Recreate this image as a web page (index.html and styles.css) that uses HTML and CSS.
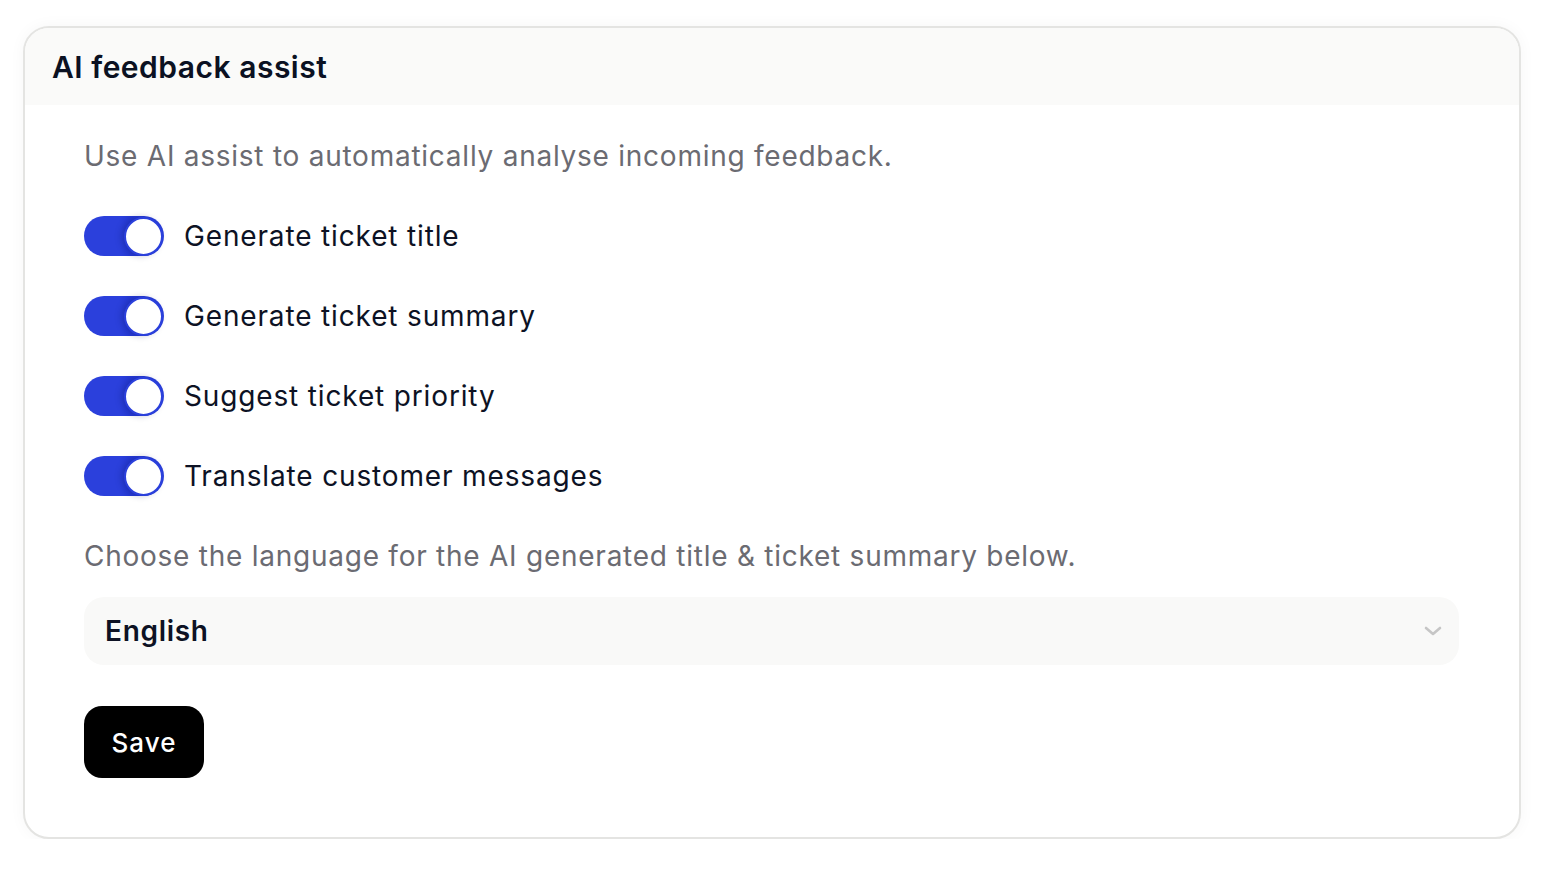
FILE: index.html
```html
<!DOCTYPE html>
<html lang="en">
<head>
<meta charset="utf-8">
<title>AI feedback assist</title>
<link rel="stylesheet" href="styles.css">
</head>
<body>
<section class="card">
  <header class="card-header">
    <h1 class="title">AI feedback assist</h1>
  </header>
  <div class="card-body">
    <p class="desc">Use AI assist to automatically analyse incoming feedback.</p>
    <label class="row"><span class="toggle"><span class="knob"></span></span><span class="label">Generate ticket title</span></label>
    <label class="row"><span class="toggle"><span class="knob"></span></span><span class="label">Generate ticket summary</span></label>
    <label class="row"><span class="toggle"><span class="knob"></span></span><span class="label">Suggest ticket priority</span></label>
    <label class="row"><span class="toggle"><span class="knob"></span></span><span class="label">Translate customer messages</span></label>
    <p class="desc">Choose the language for the AI generated title &amp; ticket summary below.</p>
    <div class="select">
      <span class="select-value">English</span>
      <svg class="chevron" width="20" height="12" viewBox="0 0 20 12"><path d="M3 3l7 6 7-6" fill="none" stroke="#c6c6c6" stroke-width="2.6" stroke-linecap="round" stroke-linejoin="round"/></svg>
    </div>
    <button class="save">Save</button>
  </div>
</section>
</body>
</html>
```

FILE: styles.css
```css
* { box-sizing: border-box; }
html, body { margin: 0; padding: 0; background: #ffffff; }
body {
  font-family: Inter, "Noto Sans", sans-serif;
  padding: 26px 23px 0 23px;
  width: 1544px;
}
.card {
  width: 1498px;
  height: 813px;
  border: 2px solid #e4e4e2;
  border-radius: 26px;
  overflow: hidden;
  background: #fff;
  box-shadow: 0 0 16px rgba(0,0,0,0.04);
}
.card-header {
  height: 77px;
  background: #fafaf9;
  display: flex;
  align-items: center;
  padding-left: 27px;
}
.title {
  margin: 0;
  font-size: 30px;
  font-weight: 600;
  color: #0b1122;
  letter-spacing: 0.5px;
  padding-top: 1px;
}
.card-body {
  display: flex;
  flex-direction: column;
  align-items: flex-start;
  padding: 31px 60px 0 59px;
  gap: 40px;
}
.desc {
  margin: 0;
  font-size: 28px;
  line-height: 40px;
  color: #6b6b72;
  letter-spacing: 0.75px;
}
.row {
  display: flex;
  align-items: center;
  gap: 20px;
  height: 40px;
}
.toggle {
  width: 80px;
  height: 40px;
  border-radius: 20px;
  background: linear-gradient(90deg, #2b40dc 0%, #2b40dc 45%, #2438d4 60%, #2b40dc 100%);
  display: flex;
  align-items: center;
  justify-content: flex-end;
  padding-right: 1px;
}
.knob {
  width: 39px;
  height: 39px;
  border-radius: 50%;
  background: #fff;
  border: 2px solid #2b40dc;
  box-shadow: -3px 0 6px rgba(10,20,90,0.25);
}
.label {
  font-size: 28px;
  color: #0d1224;
  line-height: 40px;
  letter-spacing: 0.85px;
}
.select {
  margin-top: -19px;
  width: 100%;
  height: 68px;
  border-radius: 20px;
  background: #f9f9f8;
  display: flex;
  align-items: center;
  justify-content: space-between;
  padding: 0 16px 0 21px;
}
.select-value {
  font-size: 28px;
  font-weight: 600;
  color: #0d1224;
  letter-spacing: 0.7px;
}
.chevron { display: block; }
.save {
  margin-top: 1px;
  width: 120px;
  height: 72px;
  border: none;
  border-radius: 18px;
  background: #000;
  color: #fff;
  font-family: Inter, "Noto Sans", sans-serif;
  font-size: 26px;
  font-weight: 500;
  letter-spacing: 1px;
  cursor: pointer;
}
```
